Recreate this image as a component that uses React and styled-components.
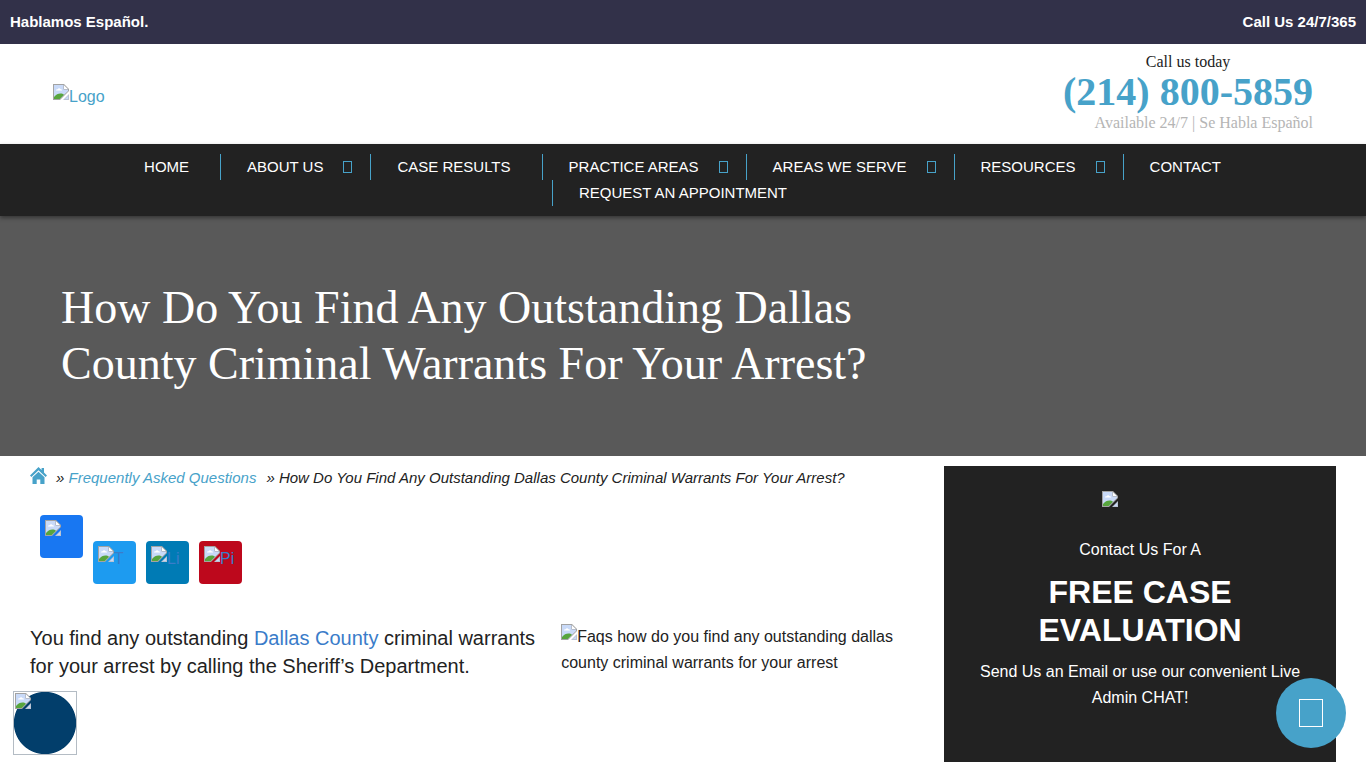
import React from "react";
import styled, { createGlobalStyle } from "styled-components";

const blue = "#47a2c9";
const dark = "#222222";
const sans = '"Liberation Sans", Arial, sans-serif';
const serif = '"Liberation Serif", "Times New Roman", serif';

const GlobalStyle = createGlobalStyle`
  *, *::before, *::after { box-sizing: border-box; }
  body {
    margin: 0;
    background: #fff;
    color: ${dark};
    font: 16px/26px ${sans};
  }
  a { color: ${blue}; text-decoration: none; }
  h1, h2, p, ul { margin: 0; padding: 0; }
`;

const TopBar = styled.div`
  display: flex;
  justify-content: space-between;
  padding: 9px 10px;
  background: #323149;
  color: #fff;
  font-size: 15px;
  font-weight: bold;
`;

const Header = styled.header`
  display: flex;
  justify-content: space-between;
  align-items: center;
  height: 100px;
  padding: 0 53px;
`;

const LogoLink = styled.a`
  display: flex;
  align-items: flex-start;
  padding-top: 6px;
`;

const CallBox = styled.div`
  display: flex;
  flex-direction: column;
  padding-bottom: 2px;
  font-family: ${serif};
  text-align: center;
`;

const CallLabel = styled.span`
  font-size: 16px;
  line-height: 20px;
`;

const Phone = styled.a`
  font-size: 40px;
  font-weight: bold;
  line-height: 40px;
`;

const Availability = styled.span`
  color: #b5b5b5;
  font-size: 16px;
  line-height: 22px;
  text-align: right;
`;

const Nav = styled.nav`
  position: relative;
  padding: 10px 100px 10px 104px;
  background: ${dark};
  box-shadow: 0 2px 4px rgba(0, 0, 0, 0.4);
`;

const NavList = styled.ul`
  display: flex;
  flex-wrap: wrap;
  justify-content: center;
  list-style: none;
`;

const NavItem = styled.li`
  display: flex;
  align-items: center;
  height: 26px;
  padding-left: 26px;
  padding-right: ${(p) => (p.$tight ? "18px" : "31px")};
  border-left: ${(p) => (p.$first ? "0" : `1px solid ${blue}`)};
`;

const NavLink = styled.a`
  color: #fff;
  font-size: 15px;
`;

const Caret = styled.svg`
  width: 9px;
  height: 12px;
  margin-left: 20px;
`;

const Hero = styled.section`
  display: flex;
  align-items: center;
  height: 240px;
  padding: 0 61px;
  background: #595959;
`;

const Title = styled.h1`
  max-width: 840px;
  color: #fff;
  font: 400 46px/56px ${serif};
`;

const Content = styled.div`
  display: grid;
  grid-template-columns: 7fr 3fr;
  padding: 10px 30px 6px;
`;

const Crumbs = styled.nav`
  display: flex;
  align-items: center;
  height: 24px;
  font-size: 15px;
  font-style: italic;
  white-space: pre;
`;

const HomeLink = styled.a`
  display: flex;
  padding-bottom: 5px;
  margin-right: 9px;
`;

const CurrentPage = styled.span`
  margin-left: 10px;
`;

const ShareRow = styled.div`
  display: flex;
  gap: 10px;
  height: 69px;
  margin: 25px 10px 40px;
`;

const ShareLink = styled.a`
  display: flex;
  align-items: flex-start;
  align-self: ${(p) => (p.$raised ? "flex-start" : "flex-end")};
  width: 43px;
  height: 43px;
  padding: 5px;
  overflow: hidden;
  border-radius: 4px;
  background: ${(p) => p.$color};
  color: #3a7cc9;
`;

const Article = styled.div`
  display: grid;
  grid-template-columns: minmax(0, 1fr) 383px;
`;

const Lead = styled.p`
  font-size: 20px;
  line-height: 28px;
  a { color: #3a7cc9; }
`;

const Figure = styled.p`
  padding-right: 40px;
`;

const Sidebar = styled.aside`
  display: flex;
  flex-direction: column;
  align-items: center;
  min-height: 296px;
  padding: 25px 30px;
  background: ${dark};
  color: #fff;
  text-align: center;
`;

const SideImage = styled.div`
  width: 76px;
  height: 46px;
  text-align: left;
  line-height: 16px;
`;

const SideTitle = styled.h2`
  margin: 10px 0;
  font-size: 32px;
  line-height: 38px;
`;

const ChatButton = styled.button`
  position: fixed;
  left: 13px;
  bottom: 13px;
  display: flex;
  align-items: flex-start;
  width: 64px;
  height: 64px;
  padding: 1px;
  border: 1px solid #b4bcc4;
  background: radial-gradient(circle closest-side, #023e6b 99%, #fff 102%);
`;

const TopButton = styled.button`
  position: fixed;
  right: 20px;
  bottom: 20px;
  display: flex;
  align-items: center;
  justify-content: center;
  width: 70px;
  height: 70px;
  padding: 0;
  border: 0;
  border-radius: 50%;
  background: ${blue};
`;

const ImageMark = styled.svg`
  flex: none;
  width: 16px;
  height: 16px;
  vertical-align: top;
`;

function MissingImage() {
  return (
    <ImageMark viewBox="0 0 16 16" aria-hidden="true">
      <path d="M0 0H11L16 5V7L7 16H0Z" fill="#a3a3a3" />
      <path d="M1 1H10.500V5.500H15V7L6.500 15H1Z" fill="#c9daf8" />
      <path d="M11 1.200 14.800 5H11Z" fill="#fff" />
      <path d="M3 6.500c0-1 1-1.500 1.700-1.200C5.200 4 7 4 7.500 5.300c1-.2 1.500.5 1.500 1.200Z" fill="#fff" />
      <path d="M1 15v-2c2-2.500 4-3.500 6.500-3.500 1.500 0 2.500.3 3.500 1.200L6.700 15Z" fill="#57a53d" />
      <path d="M16 10V16H10Z" fill="#b9c3d3" />
      <path d="M15 12V15H12Z" fill="#c9daf8" />
    </ImageMark>
  );
}

function HomeIcon() {
  return (
    <svg width="17" height="17" viewBox="0 0 17 17" fill={blue} aria-hidden="true">
      <path d="M0 8.600 8.500 0 11.600 3V1H14V5.500L17 8.600 15.600 10 8.500 3.300 1.400 10Z" />
      <path d="M2.500 10.300 8.500 4.700 14.500 10.300V17H10.300V12.500H6.700V17H2.500Z" />
    </svg>
  );
}

const links = [
  ["Home", false],
  ["About Us", true],
  ["Case Results", false],
  ["Practice Areas", true],
  ["Areas We Serve", true],
  ["Resources", true],
  ["Contact", false],
  ["Request an Appointment", false],
];

const shares = [
  ["F", "#1877f2"],
  ["T", "#1d9bf0"],
  ["Li", "#007bb5"],
  ["Pi", "#bd081c"],
];

export default function App() {
  return (
    <>
      <GlobalStyle />
      <TopBar>
        <span>Hablamos Español.</span>
        <span>Call Us 24/7/365</span>
      </TopBar>
      <Header>
        <LogoLink href="#"><MissingImage />Logo</LogoLink>
        <CallBox>
          <CallLabel>Call us today</CallLabel>
          <Phone href="tel:2148005859">(214) 800-5859</Phone>
          <Availability>Available 24/7 | Se Habla Español</Availability>
        </CallBox>
      </Header>
      <Nav aria-label="Main">
        <NavList>
          {links.map(([label, sub], i) => (
            <NavItem key={label} $first={i === 0} $tight={sub}>
              <NavLink href="#">{label.toUpperCase()}</NavLink>
              {sub && (
                <Caret viewBox="0 0 9 12" aria-hidden="true">
                  <rect x="0.5" y="0.5" width="8" height="11" fill="none" stroke={blue} />
                </Caret>
              )}
            </NavItem>
          ))}
        </NavList>
      </Nav>
      <Hero>
        <Title>How Do You Find Any Outstanding Dallas County Criminal Warrants For Your Arrest?</Title>
      </Hero>
      <Content>
        <main>
          <Crumbs aria-label="Breadcrumb">
            <HomeLink href="#" aria-label="Home"><HomeIcon /></HomeLink>
            <span>» </span>
            <a href="#">Frequently Asked Questions</a>
            <CurrentPage>» How Do You Find Any Outstanding Dallas County Criminal Warrants For Your Arrest?</CurrentPage>
          </Crumbs>
          <ShareRow>
            {shares.map(([label, color], i) => (
              <ShareLink key={label} href="#" aria-label={label} $color={color} $raised={i === 0}>
                <MissingImage />{i > 0 && label}
              </ShareLink>
            ))}
          </ShareRow>
          <Article>
            <Lead>
              You find any outstanding <a href="#">Dallas County</a> criminal warrants for your arrest by calling the Sheriff’s Department.
            </Lead>
            <Figure>
              <MissingImage />Faqs how do you find any outstanding dallas county criminal warrants for your arrest
            </Figure>
          </Article>
        </main>
        <Sidebar>
          <SideImage><MissingImage /></SideImage>
          <p>Contact Us For A</p>
          <SideTitle>FREE CASE EVALUATION</SideTitle>
          <p>Send Us an Email or use our convenient Live Admin CHAT!</p>
        </Sidebar>
      </Content>
      <ChatButton type="button" aria-label="Open chat"><MissingImage /></ChatButton>
      <TopButton type="button" aria-label="Back to top">
        <svg width="24" height="28" viewBox="0 0 24 28" aria-hidden="true">
          <rect x="0.5" y="0.5" width="23" height="27" fill="none" stroke="#fff" />
        </svg>
      </TopButton>
    </>
  );
}
